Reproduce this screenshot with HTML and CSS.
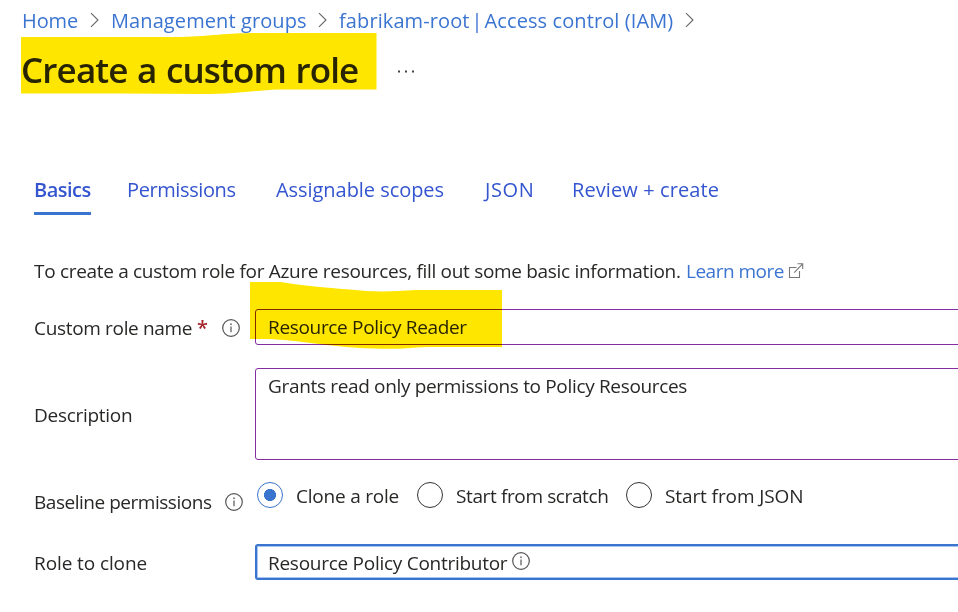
FILE: index.html
```html
<!DOCTYPE html>
<html lang="en">
<head>
<meta charset="utf-8">
<title>Create a custom role</title>
<link rel="stylesheet" href="styles.css">
</head>
<body>
<svg class="defs" aria-hidden="true">
  <symbol id="chevron" viewBox="0 0 10 16"><path d="M1 1.2 8 8 1 14.8" fill="none" stroke="#666" stroke-width="1.1"/></symbol>
  <symbol id="info" viewBox="0 0 18 18"><circle cx="9" cy="9" r="8.3" fill="none" stroke="#555" stroke-width="1.2"/><path d="M9 7.5V13.2" stroke="#777" stroke-width="1.5"/><circle cx="9" cy="5.2" r=".95" fill="#777"/></symbol>
  <symbol id="external" viewBox="0 0 16 16"><path d="M8.500 4.500H1.500V14.500H11.500V8M6.200 9.700 14.400 1.200M9.500.700H14.700V6" fill="none" stroke="#777" stroke-width="1.1"/></symbol>
</svg>
<nav class="breadcrumb">
  <a class="home">Home</a><svg class="chevron"><use href="#chevron"/></svg>
  <a class="groups">Management groups</a><svg class="chevron"><use href="#chevron"/></svg>
  <a class="access">fabrikam-root<span class="bar"> | </span>Access control (IAM)</a><svg class="chevron"><use href="#chevron"/></svg>
</nav>
<header class="heading">
  <h1>Create a custom role</h1>
  <svg class="more" viewBox="0 0 17 3"><path d="M0 .5H2V2.500H0ZM7 .500H9V2.500H7ZM14 .500H16V2.500H14Z" fill="#444"/></svg>
  <svg class="marker title-marker" viewBox="0 0 356 62"><path d="M0 5H160C190 4 205 1 235 1H355.500V57.500H258C235 58 220 62 180 62L100 61.500H0Z"/></svg>
</header>
<div class="tabs">
  <a class="tab active">Basics</a>
  <a class="tab permissions">Permissions</a>
  <a class="tab scopes">Assignable scopes</a>
  <a class="tab json">JSON</a>
  <a class="tab review">Review + create</a>
</div>
<main>
  <p class="intro"><span class="intro-text">To create a custom role for Azure resources, fill out some basic information.</span><a class="learn">Learn more</a><svg class="external"><use href="#external"/></svg></p>
  <div class="row name-row">
    <label><span class="name-label">Custom role name</span><span class="required">*</span><svg class="info"><use href="#info"/></svg></label>
    <div class="field"><span class="name-value">Resource Policy Reader</span></div>
    <svg class="marker name-marker" viewBox="0 0 253 68"><path d="M0 0H31C55 4 80 6 100 7.500C120 10 140 10 166 8H252V65H178C155 66 150 67.500 125 66.500C75 65 50 58 18 57H0Z"/></svg>
  </div>
  <div class="row description-row">
    <label><span class="description-label">Description</span></label>
    <div class="field area"><span class="description-value">Grants read only permissions to Policy Resources</span></div>
  </div>
  <div class="row baseline-row">
    <label><span class="baseline-label">Baseline permissions</span><svg class="info"><use href="#info"/></svg></label>
    <div class="options">
      <span class="radio checked"></span><span class="option clone">Clone a role</span>
      <span class="radio"></span><span class="option scratch">Start from scratch</span>
      <span class="radio"></span><span class="option from-json">Start from JSON</span>
    </div>
  </div>
  <div class="row clone-row">
    <label><span class="role-label">Role to clone</span></label>
    <div class="field focused"><span class="role-value">Resource Policy Contributor</span><svg class="info"><use href="#info"/></svg></div>
  </div>
</main>
</body>
</html>
```
FILE: styles.css
```css
* { box-sizing: border-box; }
body { margin: 0; width: 958px; height: 612px; overflow: hidden; background: #fff; color: #292827; font: 19px "Open Sans", "Noto Sans", sans-serif; white-space: nowrap; }
svg { display: block; flex: none; }
.defs { display: none; }
.breadcrumb { display: flex; align-items: center; height: 40px; padding-left: 22px; font-size: 20px; color: #3b74d1; }
.home { width: 68px; letter-spacing: -.1px; }
.groups { width: 207px; letter-spacing: .095px; }
.access { width: 346px; letter-spacing: .1px; }
.bar { word-spacing: -3.2px; letter-spacing: 0; }
.chevron { width: 10px; height: 16px; }
.chevron + a { margin-left: 11px; }
.heading { position: relative; display: flex; align-items: center; height: 58px; padding-left: 21px; }
h1 { margin: 0; width: 377px; padding-top: 2px; font-size: 35px; line-height: 58px; font-weight: 600; letter-spacing: -.86px; word-spacing: 1.2px; }
.more { width: 17px; height: 3px; margin-top: 4px; }
.marker { position: absolute; fill: #ffe600; mix-blend-mode: multiply; }
.title-marker { left: 21px; top: -8px; width: 356px; height: 62px; }
.tabs { display: flex; height: 50px; margin-top: 67px; padding-left: 34px; font-size: 20px; line-height: 49px; color: #3455cf; }
.tab { flex: none; }
.active { width: 57px; margin-right: 36px; border-bottom: 3px solid #3974cf; font-weight: 600; letter-spacing: -.5px; }
.permissions { width: 149px; letter-spacing: -.4px; }
.scopes { width: 209px; letter-spacing: -.05px; }
.json { width: 87px; letter-spacing: .6px; }
.review { letter-spacing: .1px; }
.intro { display: flex; align-items: center; height: 40px; margin: 36px 0 18px; padding-left: 34px; }
.intro-text { width: 652px; letter-spacing: -.31px; }
.learn { width: 102px; color: #3b74d1; letter-spacing: -.5px; }
.external { width: 16px; height: 16px; }
.row { position: relative; display: grid; grid-template-columns: 221px 1fr; padding-left: 34px; }
label { display: flex; align-items: center; padding-top: 2px; }
.info { width: 18px; height: 18px; }
.name-row { height: 36px; margin-bottom: 23px; }
.description-row { height: 92px; margin-bottom: 17px; }
.baseline-row { height: 36px; margin-bottom: 31px; align-items: start; }
.clone-row { height: 36px; }
.field { display: flex; align-items: center; margin-right: -6px; padding-left: 12px; border: 1px solid #832da3; border-radius: 3px; }
.area { align-items: flex-start; line-height: 34px; }
.focused { padding: 1px 0 0 11px; border: 2px solid #3974cf; box-shadow: inset 0 0 0 1px #a6c4ee; }
.focused .info { margin-top: -3px; }
.name-marker { left: 250px; top: -27px; width: 253px; height: 68px; }
.name-label { width: 163px; letter-spacing: -.33px; }
.required { width: 25px; color: #a4262c; font-size: 20px; font-weight: 600; line-height: 20px; }
.description-label { letter-spacing: -.28px; }
.baseline-label { width: 191px; letter-spacing: -.47px; }
.baseline-row label { padding-top: 12px; }
.role-label { letter-spacing: -.1px; }
.name-value { letter-spacing: -.33px; }
.description-value { letter-spacing: -.335px; }
.role-value { width: 244px; letter-spacing: -.27px; }
.options { display: flex; align-items: center; height: 36px; padding-left: 2px; }
.radio { flex: none; width: 26px; height: 26px; margin-right: 13px; border: 1px solid #333; border-radius: 50%; }
.checked { border-color: #3974cf; background: radial-gradient(circle, #3974cf 5.7px, transparent 6.3px); }
.option { padding-top: 2px; }
.clone { width: 121px; letter-spacing: -.22px; }
.scratch { width: 170px; letter-spacing: -.38px; }
.from-json { letter-spacing: -.1px; }
```
